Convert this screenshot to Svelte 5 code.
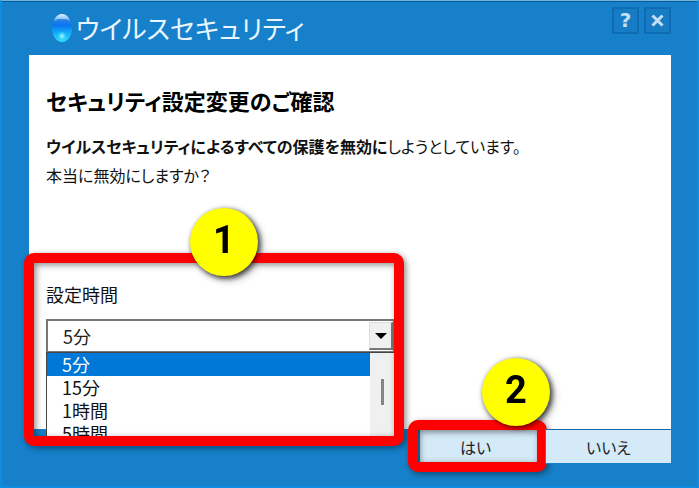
<script lang="ts">
type Period = { value: string; label: string };

const periods: Period[] = [
    { value: '5m', label: '5分' },
    { value: '15m', label: '15分' },
    { value: '1h', label: '1時間' },
    { value: '5h', label: '5時間' },
];

let selected: string = $state('5m');
</script>

<main class="dialog">
    <header class="dialog__header">
        <svg class="dialog__logo" viewBox="0 0 20 30" aria-hidden="true">
            <defs>
                <linearGradient id="drop" x1="0" y1="0" x2="0" y2="1">
                    <stop offset="0" stop-color="#8cc8f4" />
                    <stop offset="0.2" stop-color="#2b86e4" />
                    <stop offset="0.4" stop-color="#0a74f0" />
                    <stop offset="0.7" stop-color="#12b2fb" />
                    <stop offset="1" stop-color="#35dcfb" />
                </linearGradient>
                <linearGradient id="shine" x1="0" y1="0" x2="0" y2="1">
                    <stop offset="0" stop-color="#d9effc" />
                    <stop offset="1" stop-color="#6fb2ee" />
                </linearGradient>
                <radialGradient id="glow">
                    <stop offset="0" stop-color="#b8ffff" />
                    <stop offset="1" stop-color="#35dcfb" stop-opacity="0" />
                </radialGradient>
            </defs>
            <ellipse cx="10" cy="15" rx="10" ry="14" fill="url(#drop)" />
            <path d="M2 8C4 3 7 1 10 1s6 2 8 7c-3-2-5-2-8-2S5 6 2 8z" fill="url(#shine)" />
            <circle cx="10" cy="23" r="5" fill="url(#glow)" />
        </svg>
        <h1 class="dialog__title">ウイルスセキュリティ</h1>
        <div class="dialog__tools">
            <button class="tool">?</button>
            <button class="tool" aria-label="閉じる">
                <svg viewBox="0 0 23 23" aria-hidden="true">
                    <path d="M6.500 6.500l10 10M16.500 6.500l-10 10" />
                </svg>
            </button>
        </div>
    </header>

    <section class="panel">
        <h2 class="panel__heading">セキュリティ設定変更のご確認</h2>
        <p class="panel__text">
            <strong>ウイルスセキュリティによるすべての保護を無効に</strong>しようとしています。<br />
            本当に無効にしますか？
        </p>

        <div class="period">
            <label class="period__label" for="period">設定時間</label>
            <div class="period__box">
                <select class="period__select" id="period" bind:value={ selected }>
                    {#each periods as { value, label } (value)}
                        <option { value }>{ label }</option>
                    {/each}
                </select>
                <span class="period__arrow"></span>
            </div>
            <div class="menu">
                <ul class="menu__list" role="listbox" aria-label="設定時間">
                    {#each periods as { value, label } (value)}
                        <li
                            class="menu__item"
                            class:menu__item--active={ value == selected }
                            role="option"
                            aria-selected={ value == selected }
                        >{ label }</li>
                    {/each}
                </ul>
                <div class="menu__scroll"><span class="menu__thumb"></span></div>
            </div>
            <div class="mark mark--period"><span class="mark__number">1</span></div>
        </div>
    </section>

    <footer class="actions">
        <div class="actions__item">
            <button class="actions__button actions__button--yes">はい</button>
            <div class="mark mark--yes"><span class="mark__number">2</span></div>
        </div>
        <div class="actions__item">
            <button class="actions__button">いいえ</button>
        </div>
    </footer>
</main>

<style>
:global(body) {
    margin: 0;
}
.dialog {
    box-sizing: border-box;
    min-height: 100vh;
    display: flex;
    flex-direction: column;
    padding: 0 26px 22px 27px;
    border: 2px solid #0d8de0;
    border-top: 1px solid #6fb4d8;
    box-shadow: inset 0 1px 0 #075c9c;
    background-color: #1680ca;
    color: #111;
    font-family: "Noto Sans CJK JP", sans-serif;
    font-size: 18px;
    font-feature-settings: "palt";
}
.dialog__header {
    height: 54px;
    display: flex;
    align-items: center;
    padding-left: 23px;
}
.dialog__logo {
    width: 20px;
    height: 30px;
}
.dialog__title {
    flex: 1;
    margin: 0 0 0 4px;
    color: #eaf6ff;
    font-size: 26px;
    font-weight: 400;
    line-height: 40px;
}
.dialog__tools {
    align-self: flex-start;
    display: flex;
    gap: 5px;
    padding-top: 6px;
}
.tool {
    box-sizing: border-box;
    width: 27px;
    height: 27px;
    padding: 0;
    border: 2px solid #0d6cb3;
    background-color: #177cc4;
    color: #c5e0f5;
    font: bold 20px/23px "DejaVu Sans", sans-serif;
}
.tool svg {
    display: block;
    width: 100%;
    height: 100%;
    fill: none;
    stroke: #c5e0f5;
    stroke-width: 3;
}
.panel {
    flex: 1;
    padding: 29px 17px 0;
    background-color: #fff;
}
.panel__heading {
    margin: 0;
    color: #000;
    font-size: 22px;
    font-weight: 700;
    line-height: 32px;
}
.panel__text {
    margin: 16px 0 0;
    font-size: 16px;
    line-height: 29px;
}
.panel__text strong {
    font-weight: 700;
}
.period {
    position: relative;
    max-width: 348px;
    margin-top: 92px;
}
.period__label {
    display: block;
    line-height: 24px;
}
.period__box {
    position: relative;
    margin-top: 13px;
}
.period__select {
    box-sizing: border-box;
    display: block;
    width: 100%;
    height: 33px;
    padding: 0 30px 0 15px;
    border: 1px solid #777;
    border-width: 2px 1px 1px 2px;
    border-radius: 0;
    appearance: none;
    background-color: #fff;
    color: #222;
    font: inherit;
}
.period__arrow {
    position: absolute;
    top: 3px;
    right: 1px;
    box-sizing: border-box;
    width: 24px;
    height: 28px;
    display: grid;
    place-items: center;
    border: 1px solid #ddd;
    border-right: 2px solid #777;
    border-bottom: 2px solid #777;
    background-color: #f0f0f0;
    pointer-events: none;
}
.period__arrow::after {
    content: "";
    border: 6px solid transparent;
    border-top-color: #000;
    border-bottom-width: 0;
}
.menu {
    position: absolute;
    top: 100%;
    left: 0;
    right: 0;
    box-sizing: border-box;
    height: 86px;
    display: flex;
    overflow: hidden;
    border: 1px solid #444;
    border-width: 1px 0 0 1px;
    background-color: #fff;
}
.menu__list {
    flex: 1;
    margin: 0;
    padding: 0;
    list-style: none;
}
.menu__item {
    padding-left: 15px;
    line-height: 23px;
}
.menu__item--active {
    background-color: #0078d7;
    color: #fff;
}
.menu__scroll {
    width: 24px;
    display: flex;
    justify-content: center;
    align-items: flex-start;
    padding-top: 26px;
    box-sizing: border-box;
    background-color: #f0f0f0;
}
.menu__thumb {
    width: 3px;
    height: 26px;
    background-color: #868686;
}
.mark {
    position: absolute;
    box-sizing: border-box;
    border: 10px solid #f00;
    border-radius: 10px;
    filter: drop-shadow(2px 2px 3px rgb(0 0 0 / 45%));
    pointer-events: none;
}
.mark--period {
    top: -29px;
    left: -22px;
    right: -10px;
    height: 193px;
}
.mark--yes {
    inset: -9px -2px -8px -11px;
}
.mark__number {
    position: absolute;
    width: 68px;
    height: 68px;
    border-radius: 50%;
    background-color: #ff0;
    box-shadow: 2px 2px 5px rgb(0 0 0 / 60%);
    color: #000;
    font-family: Roboto, sans-serif;
    font-size: 38px;
    font-weight: 700;
    line-height: 64px;
    text-align: center;
}
.mark--period .mark__number {
    top: -55px;
    left: 156px;
}
.mark--yes .mark__number {
    top: -72px;
    right: -13px;
}
.actions {
    display: flex;
    justify-content: flex-end;
}
.actions__item {
    position: relative;
    width: 126px;
}
.actions__button {
    box-sizing: border-box;
    display: block;
    width: 100%;
    height: 35px;
    padding: 0;
    border: 1px solid #1680ca;
    border-top-color: #1668ad;
    border-right-width: 0;
    background-color: #d5eaf9;
    color: #222;
    font: inherit;
    font-size: 16px;
    font-feature-settings: inherit;
}
.actions__button--yes {
    padding-right: 14px;
}
</style>
